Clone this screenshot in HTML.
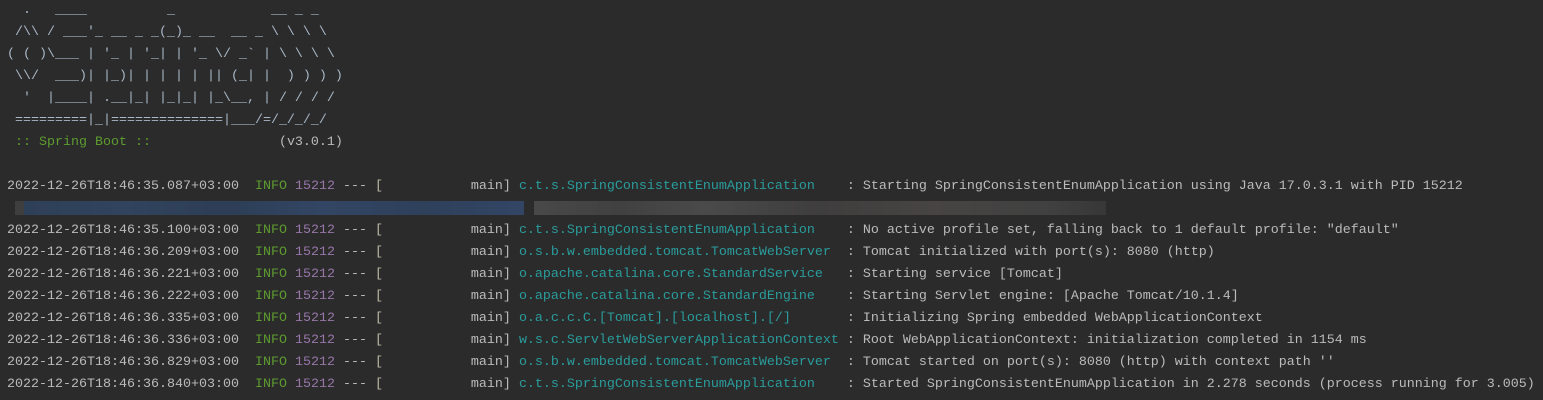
<!DOCTYPE html>
<html><head><meta charset="utf-8"><style>
html,body{margin:0;padding:0;background:#2b2b2b;width:1543px;height:400px;overflow:hidden}
pre{margin:0;position:absolute;left:7px;top:0px;font-family:"Liberation Mono",monospace;font-size:13.33px;line-height:22px;color:#bbbbbb;white-space:pre}
.b{color:#a9b7c6}.g{color:#5d9b2f}.p{color:#9876aa}.c{color:#2a9c9c}.y{color:#bdb9a6}
.blur{position:absolute;top:201px;height:14px;opacity:.8}
</style></head><body>
<pre><span class="b">  .   ____          _            __ _ _
 /\\ / ___'_ __ _ _(_)_ __  __ _ \ \ \ \
( ( )\___ | '_ | '_| | '_ \/ _` | \ \ \ \
 \\/  ___)| |_)| | | | | || (_| |  ) ) ) )
  '  |____| .__|_| |_|_| |_\__, | / / / /
 =========|_|==============|___/=/_/_/_/</span>
<span class="g"> :: Spring Boot ::</span>                (v3.0.1)

2022-12-26T18:46:35.087+03:00  <span class="g">INFO</span> <span class="p">15212</span> --- <span class="y">[</span>           main] <span class="c">c.t.s.SpringConsistentEnumApplication   </span> : Starting SpringConsistentEnumApplication using Java 17.0.3.1 with PID 15212

2022-12-26T18:46:35.100+03:00  <span class="g">INFO</span> <span class="p">15212</span> --- <span class="y">[</span>           main] <span class="c">c.t.s.SpringConsistentEnumApplication   </span> : No active profile set, falling back to 1 default profile: "default"
2022-12-26T18:46:36.209+03:00  <span class="g">INFO</span> <span class="p">15212</span> --- <span class="y">[</span>           main] <span class="c">o.s.b.w.embedded.tomcat.TomcatWebServer </span> : Tomcat initialized with port(s): 8080 (http)
2022-12-26T18:46:36.221+03:00  <span class="g">INFO</span> <span class="p">15212</span> --- <span class="y">[</span>           main] <span class="c">o.apache.catalina.core.StandardService  </span> : Starting service [Tomcat]
2022-12-26T18:46:36.222+03:00  <span class="g">INFO</span> <span class="p">15212</span> --- <span class="y">[</span>           main] <span class="c">o.apache.catalina.core.StandardEngine   </span> : Starting Servlet engine: [Apache Tomcat/10.1.4]
2022-12-26T18:46:36.335+03:00  <span class="g">INFO</span> <span class="p">15212</span> --- <span class="y">[</span>           main] <span class="c">o.a.c.c.C.[Tomcat].[localhost].[/]      </span> : Initializing Spring embedded WebApplicationContext
2022-12-26T18:46:36.336+03:00  <span class="g">INFO</span> <span class="p">15212</span> --- <span class="y">[</span>           main] <span class="c">w.s.c.ServletWebServerApplicationContext</span> : Root WebApplicationContext: initialization completed in 1154 ms
2022-12-26T18:46:36.829+03:00  <span class="g">INFO</span> <span class="p">15212</span> --- <span class="y">[</span>           main] <span class="c">o.s.b.w.embedded.tomcat.TomcatWebServer </span> : Tomcat started on port(s): 8080 (http) with context path ''
2022-12-26T18:46:36.840+03:00  <span class="g">INFO</span> <span class="p">15212</span> --- <span class="y">[</span>           main] <span class="c">c.t.s.SpringConsistentEnumApplication   </span> : Started SpringConsistentEnumApplication in 2.278 seconds (process running for 3.005)</pre>
<div class="blur" style="left:15px;width:9px;background:#444"></div>
<div class="blur" style="left:24px;width:500px;background:linear-gradient(90deg,#2f4562,#33496a 20%,#2e4260 40%,#344c72 60%,#2f4566 80%,#344c74)"></div>
<div class="blur" style="left:534px;width:572px;background:linear-gradient(90deg,#505050,#464646 15%,#525252 30%,#444242 50%,#4e4b49 70%,#464646 90%,#3a3a3a)"></div>
</body></html>
